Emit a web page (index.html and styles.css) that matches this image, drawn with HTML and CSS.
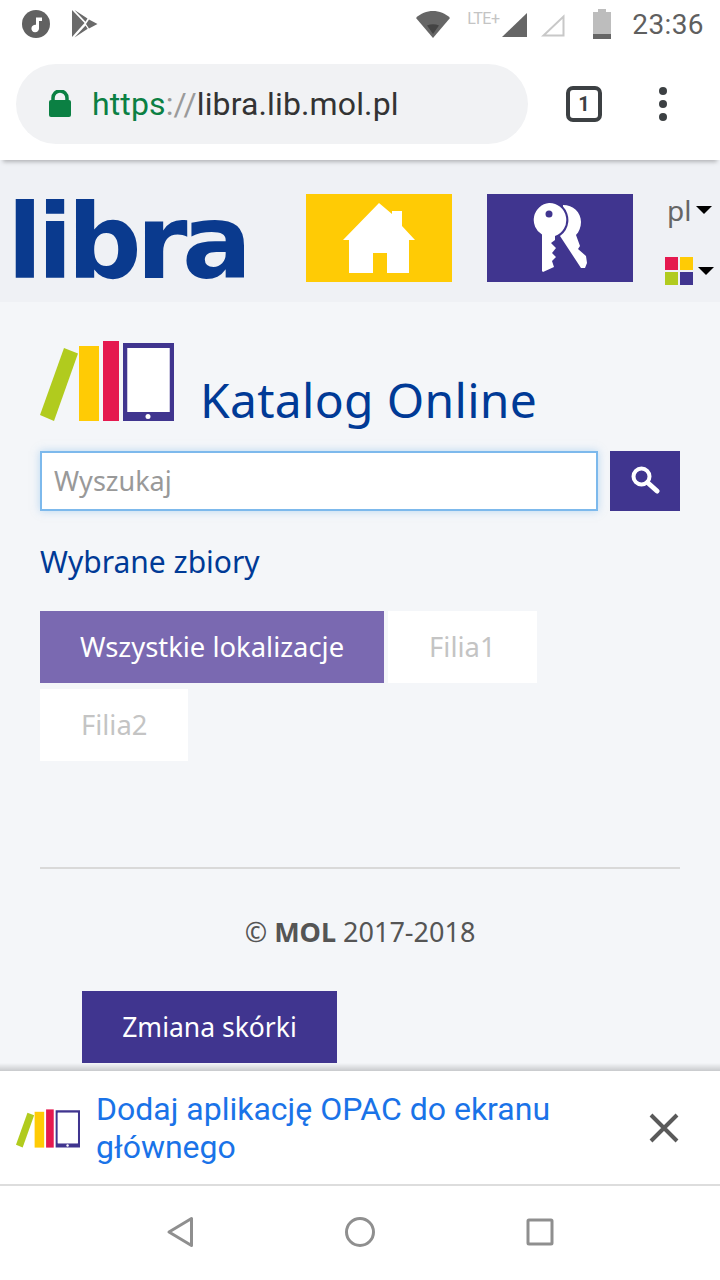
FILE: index.html
```html
<!DOCTYPE html>
<html lang="pl">
<head>
    <meta charset="UTF-8">
    <meta name="viewport" content="width=device-width, initial-scale=1.0">
    <title>Katalog Online</title>
    <link rel="stylesheet" href="styles.css">
</head>
<body>
    <svg class="defs" width="0" height="0">
        <symbol id="books" viewBox="0 0 134 80">
            <polygon points="24,7 38,12.500 14,80 0,74" fill="#b1cb1e"/>
            <rect x="39" y="5" width="20" height="75" fill="#ffcb05"/>
            <rect x="63" y="0" width="16" height="80" fill="#e5194f"/>
            <path d="M83 2h51v78H83z M87.500 7v64h42V7z" fill="#40358f" fill-rule="evenodd"/>
            <rect x="87.500" y="7" width="42" height="64" fill="#fff"/>
            <circle cx="108" cy="75.500" r="2.500" fill="#fff"/>
        </symbol>
    </svg>

    <div class="phone">
        <!-- pasek stanu -->
        <div class="status-bar">
            <svg class="ic-music" width="28" height="28" viewBox="0 0 28 28">
                <circle cx="14" cy="14" r="14" fill="#616161"/>
                <path d="M14 7.500h6v3.500h-3v7.500a3.800 3.800 0 1 1-3-3.700z" fill="#fff"/>
            </svg>
            <svg class="ic-play" width="26" height="28" viewBox="0 0 26 28">
                <path d="M0 0l12.500 13L0 27z" fill="#6a6a6a"/>
                <path d="M2.500 0l13 8.500-2 3.300z M2.500 27.500l11-12 2.200 3.300z M17 9.500l8.500 4.500-8.500 4.500-3-4.500z" fill="#6a6a6a"/>
            </svg>
            <div class="status-right">
                <svg class="ic-wifi" width="34" height="27" viewBox="0 0 34 27">
                    <path d="M0 7C9-2.300 25-2.300 34 7L17 27z" fill="#666"/>
                    <path d="M11 14.500c4-1.700 8-1.700 12 0L17 23z" fill="#444"/>
                </svg>
                <span class="lte">LTE+</span>
                <svg class="ic-signal" width="25" height="24" viewBox="0 0 25 24">
                    <path d="M25 0v24H0z" fill="#666"/>
                </svg>
                <svg class="ic-signal-empty" width="25" height="24" viewBox="0 0 25 24">
                    <path d="M23.500 3.500v19H3.500z" fill="none" stroke="#c8c8c8" stroke-width="2"/>
                </svg>
                <svg class="ic-battery" width="18" height="30" viewBox="0 0 18 30">
                    <path d="M5 0h8v3h5v27H0V3h5z" fill="#bdbdbd"/>
                    <rect y="25" width="18" height="5" fill="#666"/>
                </svg>
                <span class="clock">23:36</span>
            </div>
        </div>

        <!-- pasek adresu -->
        <div class="toolbar">
            <div class="url-bar">
                <svg class="ic-lock" width="22" height="28" viewBox="0 0 22 28">
                    <path d="M4 12V8a7 7 0 0 1 14 0v4" fill="none" stroke="#0b8043" stroke-width="3.500"/>
                    <rect y="10" width="22" height="17" rx="2" fill="#0b8043"/>
                </svg>
                <span class="url"><span class="url-scheme">https</span><span class="url-sep">://</span>libra.lib.mol.pl</span>
            </div>
            <div class="tab-count">1</div>
            <div class="kebab"><i></i><i></i><i></i></div>
        </div>

        <div class="page">
            <header class="site-header">
                <div class="logo">libra</div>
                <a class="tile tile-home">
                    <svg width="72" height="70" viewBox="0 0 72 70">
                        <path d="M36 0L49 11V8h10v15l13 14h-6v33H44V50H30v20H6V37H0z" fill="#fff"/>
                    </svg>
                </a>
                <a class="tile tile-keys">
                    <svg width="56" height="70" viewBox="0 0 56 70">
                        <path d="M17 0a17 17 0 0 1 6 33v4l-4 3 5 5-4 5 4 4-4 4 2 6-11 5-1-1V31.500A17 17 0 0 1 17 0z" fill="#fff"/>
                        <circle cx="17" cy="11" r="3.500" fill="#40358f"/>
                        <path d="M31 2C41 2 49 9 49 19C49 24 47 29 44 32L48 43L46 46L54 53L55 60L53 65L49 65L28 33A19.500 19.500 0 0 0 31 3.500z" fill="#fff"/>
                    </svg>
                </a>
                <div class="pickers">
                    <div class="picker picker-lang">pl<span class="caret"></span></div>
                    <div class="picker picker-skin">
                        <span class="swatches"><i class="s-red"></i><i class="s-yellow"></i><i class="s-green"></i><i class="s-blue"></i></span>
                        <span class="caret"></span>
                    </div>
                </div>
            </header>

            <main class="content">
                <div class="catalog-title">
                    <svg class="books" width="134" height="80"><use href="#books"/></svg>
                    <h1>Katalog Online</h1>
                </div>

                <div class="search">
                    <div class="search-input">Wyszukaj</div>
                    <button class="search-btn">
                        <svg width="30" height="30" viewBox="0 0 30 30">
                            <circle cx="11.500" cy="11.500" r="8" fill="none" stroke="#fff" stroke-width="4"/>
                            <path d="M17.500 17.500L27 26" stroke="#fff" stroke-width="5" stroke-linecap="round"/>
                        </svg>
                    </button>
                </div>

                <h2 class="section-title">Wybrane zbiory</h2>

                <div class="filters">
                    <a class="filter active">Wszystkie lokalizacje</a>
                    <a class="filter">Filia1</a>
                    <a class="filter">Filia2</a>
                </div>

                <hr class="divider">

                <p class="copyright">© <b>MOL</b> 2017-2018</p>
                <a class="skin-btn">Zmiana skórki</a>
            </main>
        </div>

        <!-- baner instalacji -->
        <div class="install-banner">
            <svg class="books-small" width="64" height="39"><use href="#books"/></svg>
            <div class="install-text">Dodaj aplikację OPAC do ekranu głównego</div>
            <svg class="ic-close" width="30" height="30" viewBox="0 0 30 30">
                <path d="M2 2l26 26M28 2L2 28" stroke="#5a5a5a" stroke-width="4"/>
            </svg>
        </div>

        <!-- nawigacja systemowa -->
        <nav class="nav-bar">
            <svg width="28" height="32" viewBox="0 0 28 32">
                <path d="M25.500 2.500v27L3 16z" fill="none" stroke="#8f8f8f" stroke-width="3" stroke-linejoin="round"/>
            </svg>
            <svg width="32" height="32" viewBox="0 0 32 32">
                <circle cx="16" cy="16" r="13.500" fill="none" stroke="#8f8f8f" stroke-width="3"/>
            </svg>
            <svg width="28" height="28" viewBox="0 0 28 28">
                <rect x="2" y="2" width="24" height="24" rx="1" fill="none" stroke="#8f8f8f" stroke-width="3"/>
            </svg>
        </nav>
    </div>
</body>
</html>
```

FILE: styles.css
```css
:root {
    --navy: #40358f;
    --blue: #003a96;
    --violet: #7a69b1;
    --page: #f4f6f9;
}

* {
    box-sizing: border-box;
}

body {
    margin: 0;
    background: #fff;
    font-family: "Noto Sans", sans-serif;
}

.defs {
    display: block;
    height: 0;
}

.phone {
    width: 720px;
    height: 1280px;
    display: flex;
    flex-direction: column;
    overflow: hidden;
}

/* pasek stanu */
.status-bar {
    height: 50px;
    flex: none;
    display: flex;
    align-items: center;
    padding: 0 16px 2px 22px;
}

.ic-play {
    margin-left: 22px;
}

.status-right {
    margin-left: auto;
    display: flex;
    align-items: center;
}

.lte {
    font: 16px "Roboto", sans-serif;
    color: #c4c4c4;
    width: 36px;
    margin: 0 0 12px 17px;
    letter-spacing: -0.5px;
}

.ic-signal {
    margin-left: -1px;
    margin-top: 2px;
}

.ic-signal-empty {
    margin-left: 13px;
    margin-top: 2px;
}

.ic-battery {
    margin-left: 28px;
}

.clock {
    font: 28px "Roboto", sans-serif;
    letter-spacing: 0.4px;
    color: #5f5f5f;
    margin-left: 21px;
}

/* pasek adresu */
.toolbar {
    height: 110px;
    flex: none;
    display: flex;
    align-items: flex-start;
    padding: 14px 0 0 16px;
    box-shadow: 0 5px 4px -3px rgba(0, 0, 0, 0.25);
    position: relative;
    z-index: 1;
    background: #fff;
}

.url-bar {
    width: 512px;
    height: 80px;
    border-radius: 40px;
    background: #f1f2f4;
    display: flex;
    align-items: center;
    padding-left: 33px;
}

.url {
    font: 32px "Roboto", sans-serif;
    letter-spacing: 0.13px;
    color: #333;
    margin-left: 21px;
}

.url-scheme {
    color: #0b8043;
}

.url-sep {
    color: #9a9a9a;
}

.tab-count {
    width: 36px;
    height: 36px;
    margin: 22px 0 0 38px;
    border: 4px solid #3c4043;
    border-radius: 7px;
    font: bold 20px/28px "Roboto", sans-serif;
    color: #3c4043;
    text-align: center;
}

.kebab {
    display: flex;
    flex-direction: column;
    gap: 5px;
    margin: 23px 0 0 57px;
}

.kebab i {
    width: 8px;
    height: 8px;
    border-radius: 50%;
    background: #3c4043;
}

/* strona */
.page {
    flex: 1;
    min-height: 0;
    background: var(--page);
    overflow: hidden;
    position: relative;
}

.page::after {
    content: "";
    position: absolute;
    left: 0;
    right: 0;
    bottom: 0;
    height: 8px;
    background: linear-gradient(rgba(0, 0, 0, 0), rgba(0, 0, 0, 0.18));
}

.site-header {
    height: 142px;
    background: #eff1f5;
    display: flex;
    align-items: flex-start;
    padding: 34px 0 0 14px;
}

.logo {
    width: 292px;
    height: 88px;
    padding-top: 4px;
    font: bold 104px/88px "DejaVu Sans", sans-serif;
    color: #0a3a8e;
    letter-spacing: -5.500px;
    margin-left: -7px;
    margin-right: 7px;
}

.tile {
    width: 146px;
    height: 88px;
    display: flex;
    align-items: center;
    justify-content: center;
}

.tile-home {
    background: #ffcb05;
}

.tile-keys {
    background: var(--navy);
    margin-left: 35px;
}

.pickers {
    margin-left: 34px;
    display: flex;
    flex-direction: column;
}

.picker {
    display: flex;
    align-items: center;
}

.picker-lang {
    font-size: 28px;
    line-height: 36px;
    color: #666;
    margin-top: -2px;
}

.picker-skin {
    margin-top: 29px;
    margin-left: -2px;
}

.caret {
    width: 0;
    height: 0;
    border-left: 8px solid transparent;
    border-right: 8px solid transparent;
    border-top: 8px solid #000;
    margin-left: 5px;
}

.swatches {
    display: grid;
    grid-template-columns: 13px 13px;
    gap: 2px;
}

.swatches i {
    height: 13px;
}

.s-red { background: #e5194f; }
.s-yellow { background: #ffcb05; }
.s-green { background: #b1cb1e; }
.s-blue { background: var(--navy); }

.content {
    padding: 39px 40px 0;
}

.catalog-title {
    display: flex;
    align-items: flex-end;
}

.catalog-title h1 {
    margin: 0 0 -10px 26px;
    font-size: 48px;
    line-height: 62px;
    letter-spacing: 0.3px;
    font-weight: 400;
    color: var(--blue);
}

.books {
    display: block;
}

.search {
    display: flex;
    margin-top: 30px;
    gap: 12px;
}

.search-input {
    flex: 1;
    height: 60px;
    background: #fff;
    border: 2px solid #7db9ec;
    box-shadow: 0 0 8px rgba(125, 185, 236, 0.5);
    font-size: 27px;
    line-height: 56px;
    color: #999;
    padding-left: 12px;
}

.search-btn {
    width: 70px;
    height: 60px;
    border: none;
    padding: 0;
    background: var(--navy);
}

.section-title {
    margin: 31px 0 0;
    font-size: 30px;
    line-height: 40px;
    font-weight: 400;
    color: var(--blue);
}

.filters {
    display: flex;
    flex-wrap: wrap;
    gap: 6px 4px;
    margin-top: 29px;
}

.filter {
    height: 72px;
    padding: 0 41px;
    background: #fff;
    font-size: 27.400px;
    line-height: 72px;
    color: #c4c4c4;
}

.filter.active {
    padding: 0 40px;
    background: var(--violet);
    color: #fff;
}

.divider {
    margin: 106px 0 0;
    border: none;
    border-top: 2px solid #d9d9d9;
}

.copyright {
    margin: 44px 0 0;
    text-align: center;
    font-size: 27px;
    line-height: 38px;
    color: #555;
}

.skin-btn {
    display: block;
    width: 255px;
    height: 72px;
    margin: 40px 0 0 42px;
    background: var(--navy);
    color: #fff;
    font-size: 26.500px;
    line-height: 72px;
    text-align: center;
}

/* baner */
.install-banner {
    height: 115px;
    flex: none;
    display: flex;
    align-items: center;
    background: #fff;
    border-bottom: 2px solid #ddd;
    padding-left: 16px;
}

.books-small {
    flex: none;
    margin-top: 2px;
}

.install-text {
    width: 480px;
    margin-left: 16px;
    font: 32px/38px "Roboto", sans-serif;
    color: #1a73e8;
}

.ic-close {
    margin-left: 73px;
}

/* nawigacja */
.nav-bar {
    height: 94px;
    flex: none;
    background: #fff;
    display: flex;
    align-items: center;
    justify-content: center;
    gap: 150px;
    padding-bottom: 2px;
}
```
